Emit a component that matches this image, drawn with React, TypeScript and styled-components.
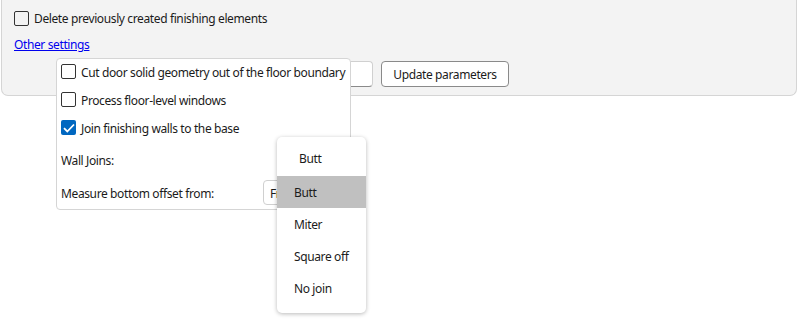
import React from "react";
import styled, { createGlobalStyle } from "styled-components";

const GlobalStyle = createGlobalStyle`
  html, body {
    margin: 0;
    padding: 0;
    background: #ffffff;
    font-family: "Noto Sans", "Open Sans", sans-serif;
    font-size: 12px;
    letter-spacing: -0.38px;
    color: #1b1b1b;
    white-space: nowrap;
  }
`;

const Page = styled.div`
  position: relative;
  width: 800px;
  height: 321px;
  overflow: hidden;
`;

const Panel = styled.div`
  margin-left: 1px;
  width: 796px;
  height: 96px;
  box-sizing: border-box;
  background: #f3f3f3;
  border: 1px solid #d5d5d5;
  border-top: none;
  border-radius: 0 0 7px 7px;
  padding: 9px 0 0 12px;
  display: flex;
  flex-direction: column;
`;

const CheckRow = styled.label`
  display: flex;
  align-items: center;
  gap: 5px;
  height: 18px;
  flex-shrink: 0;
`;

const Box = styled.span<{ $checked?: boolean; $bg?: string }>`
  width: 15px;
  height: 15px;
  box-sizing: border-box;
  border-radius: 2px;
  flex-shrink: 0;
  display: flex;
  align-items: center;
  justify-content: center;
  border: ${({ $checked }) => ($checked ? "none" : "1px solid #333333")};
  background: ${({ $checked, $bg }) => ($checked ? "#0067c0" : $bg ?? "transparent")};
`;

const Link = styled.a`
  margin-top: 9px;
  color: #0000ee;
  text-decoration: underline;
  width: max-content;
  cursor: pointer;
`;

const ActionRow = styled.div`
  margin-top: 8px;
  display: flex;
  gap: 8px;
  padding-left: 187px;
`;

const TextInput = styled.div`
  width: 172px;
  height: 26px;
  box-sizing: border-box;
  background: #ffffff;
  border: 1px solid #d0d0d0;
  border-bottom-color: #8a8a8a;
  border-radius: 4px;
`;

const Button = styled.button`
  width: 128px;
  height: 26px;
  box-sizing: border-box;
  background: #ffffff;
  border: 1px solid #8a8a8a;
  border-radius: 4px;
  font: inherit;
  letter-spacing: inherit;
  color: #1b1b1b;
  padding: 0;
`;

const Popup = styled.div`
  position: absolute;
  left: 56px;
  top: 58px;
  width: 295px;
  height: 152px;
  box-sizing: border-box;
  background: #ffffff;
  border: 1px solid #d5d5d5;
  border-radius: 4px;
  padding: 5px 0 0 4px;
  display: flex;
  flex-direction: column;
`;

const PopupCheck = styled(CheckRow)`
  height: 28px;
  align-items: flex-start;
`;

const FieldRow = styled.div<{ $h: number }>`
  display: flex;
  align-items: center;
  flex-shrink: 0;
  height: ${({ $h }) => $h}px;
`;

const Combo = styled.div`
  position: absolute;
  left: 206px;
  top: 121px;
  width: 80px;
  height: 25px;
  box-sizing: border-box;
  border: 1px solid #d0d0d0;
  border-radius: 4px;
  padding: 4px 0 0 6px;
  background: #ffffff;
`;

const Dropdown = styled.div`
  position: absolute;
  left: 277px;
  top: 137px;
  width: 89px;
  height: 176px;
  box-sizing: border-box;
  background: #ffffff;
  border-radius: 5px;
  box-shadow: 0 1px 4px rgba(0, 0, 0, 0.28);
  display: flex;
  flex-direction: column;
`;

const DropHead = styled.div`
  height: 39px;
  display: flex;
  align-items: center;
  padding-left: 22px;
  padding-top: 3px;
  box-sizing: border-box;
`;

const Option = styled.div<{ $selected?: boolean }>`
  height: 32px;
  display: flex;
  align-items: center;
  padding-left: 17px;
  background: ${({ $selected }) => ($selected ? "#c0c0c0" : "transparent")};
`;

const Check = () => (
  <svg width="12" height="10" viewBox="0 0 12 10">
    <path d="M1 5.2 L4.3 8.5 L11 1.5" fill="none" stroke="#ffffff" strokeWidth="1.8" />
  </svg>
);

const options = ["Butt", "Miter", "Square off", "No join"];

export default function App() {
  return (
    <Page>
      <GlobalStyle />
      <Panel>
        <CheckRow>
          <Box />
          <span>Delete previously created finishing elements</span>
        </CheckRow>
        <Link>Other settings</Link>
        <ActionRow>
          <TextInput />
          <Button>Update parameters</Button>
        </ActionRow>
      </Panel>

      <Popup>
        <PopupCheck>
          <Box $bg="#ffffff" />
          <span>Cut door solid geometry out of the floor boundary</span>
        </PopupCheck>
        <PopupCheck>
          <Box $bg="#ffffff" />
          <span>Process floor-level windows</span>
        </PopupCheck>
        <PopupCheck>
          <Box $checked>
            <Check />
          </Box>
          <span>Join finishing walls to the base</span>
        </PopupCheck>
        <FieldRow $h={25}>Wall Joins:</FieldRow>
        <FieldRow $h={40}>Measure bottom offset from:</FieldRow>
        <Combo>Fr</Combo>
      </Popup>

      <Dropdown>
        <DropHead>Butt</DropHead>
        {options.map((o, i) => (
          <Option key={o} $selected={i === 0}>
            {o}
          </Option>
        ))}
      </Dropdown>
    </Page>
  );
}
